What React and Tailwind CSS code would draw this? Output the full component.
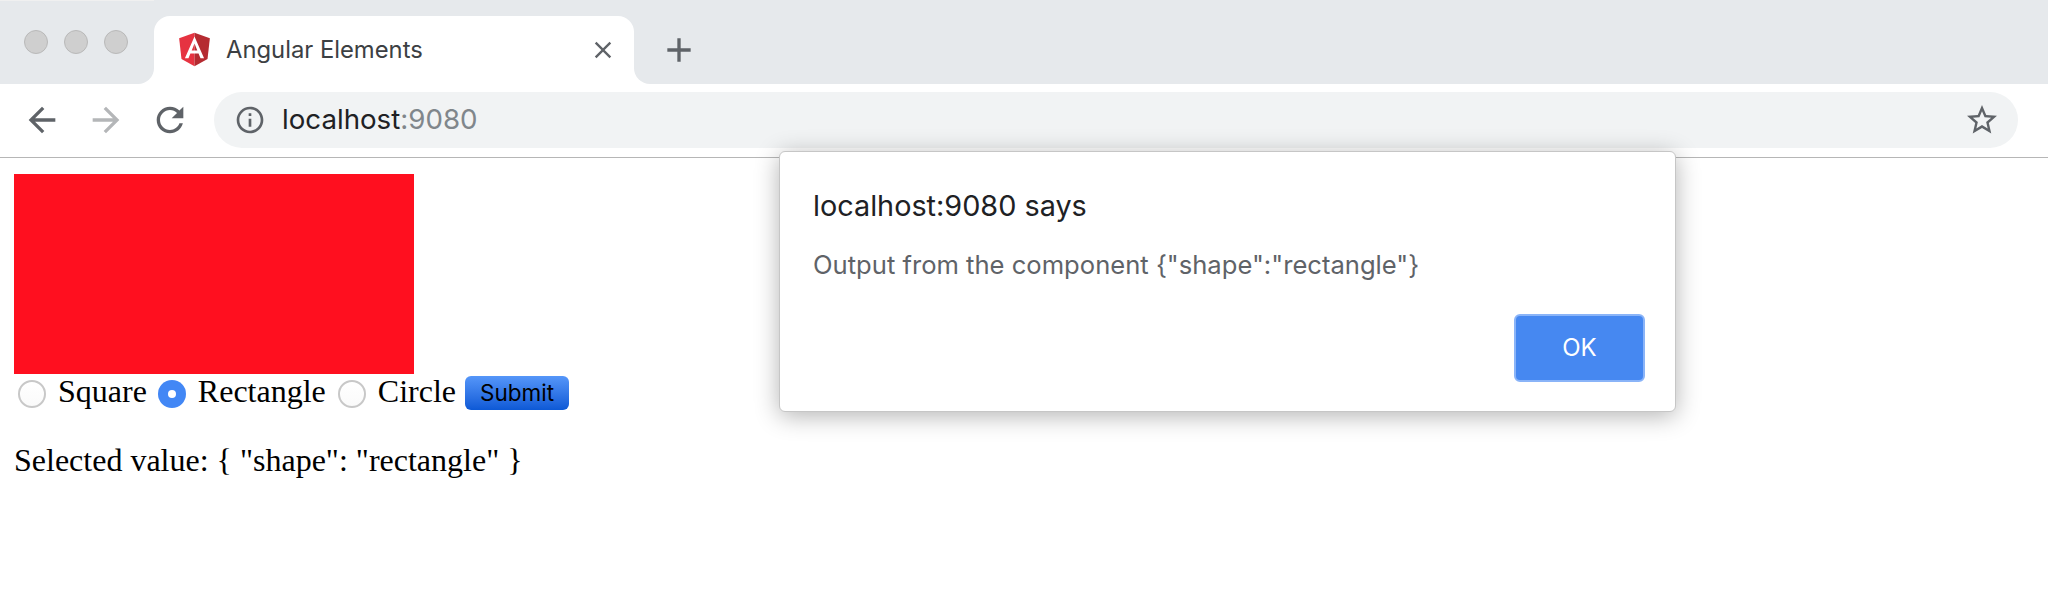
const ICON_GRAY = "#5f6368";

const Icon = ({ d, size = 40, fill = ICON_GRAY }) => (
  <svg width={size} height={size} viewBox="0 0 24 24" className="shrink-0">
    <path d={d} fill={fill} />
  </svg>
);

const AngularLogo = () => (
  <svg width="33" height="35" viewBox="25 25 200 210" preserveAspectRatio="none" className="shrink-0">
    <polygon points="125,30 31.9,63.2 46.1,186.3 125,230" fill="#e63341" />
    <polygon points="125,30 125,230 203.9,186.3 218.1,63.2" fill="#b52b31" />
    <path
      fill="#fff"
      d="M125,52.1L66.8,182.6h21.7l11.7-29.2h49.4l11.7,29.2h21.7L125,52.1z M142,135.4H108l17-40.9L142,135.4z"
    />
  </svg>
);

const Radio = ({ checked }) =>
  checked ? (
    <div className="flex h-7 w-7 shrink-0 items-center justify-center rounded-full bg-[#4287f5]">
      <div className="h-2 w-2 rounded-full bg-white" />
    </div>
  ) : (
    <div className="h-7 w-7 shrink-0 rounded-full border-2 border-[#c8c8c8] bg-gradient-to-b from-white to-[#fafafa]" />
  );

export default function App() {
  return (
    <div className="relative h-[601px] w-[2048px] overflow-hidden bg-white">
      {/* Tab strip */}
      <div className="flex h-[84px] bg-white">
        <div className="flex w-[154px] items-center gap-4 rounded-br-2xl border-t border-[#f0f0f0] bg-[#e6e9ec] pb-[2px] pl-6">
          <div className="h-6 w-6 rounded-full border border-[#b9b9b9] bg-[#cfcfcf]" />
          <div className="h-6 w-6 rounded-full border border-[#b9b9b9] bg-[#cfcfcf]" />
          <div className="h-6 w-6 rounded-full border border-[#b9b9b9] bg-[#cfcfcf]" />
        </div>
        <div className="w-[480px] bg-[#e6e9ec] pt-4">
          <div className="flex h-[68px] items-center rounded-t-2xl bg-white pb-[1px] pl-[24px] pr-[17px]">
            <AngularLogo />
            <span className="ml-[15px] flex-1 font-['Inter',sans-serif] text-[23.8px] text-[#3c4043]">
              Angular Elements
            </span>
            <Icon
              size={28}
              d="M19 6.41L17.59 5 12 10.59 6.41 5 5 6.41 10.59 12 5 17.59 6.41 19 12 13.41 17.59 19 19 17.59 13.41 12z"
            />
          </div>
        </div>
        <div className="flex flex-1 items-center rounded-bl-2xl bg-[#e6e9ec] pl-[25px] pt-4">
          <Icon size={40} d="M19 13h-6v6h-2v-6H5v-2h6V5h2v6h6v2z" />
        </div>
      </div>

      {/* Toolbar */}
      <div className="flex h-[74px] items-center gap-6 border-b border-[#b6b6b6] pb-[1px] pl-[22px] pr-[30px]">
        <Icon d="M20 11H7.83l5.59-5.59L12 4l-8 8 8 8 1.41-1.41L7.83 13H20v-2z" />
        <Icon fill="#b4b6b8" d="M4 11h12.17l-5.59-5.59L12 4l8 8-8 8-1.41-1.41L16.17 13H4v-2z" />
        <Icon d="M17.65 6.35C16.2 4.9 14.21 4 12 4c-4.42 0-7.99 3.58-7.99 8s3.57 8 7.99 8c3.73 0 6.84-2.55 7.73-6h-2.08c-.82 2.33-3.04 4-5.65 4-3.31 0-6-2.69-6-6s2.69-6 6-6c1.66 0 3.14.69 4.22 1.78L13 11h7V4l-2.35 2.35z" />
        <div className="flex h-14 flex-1 items-center rounded-full bg-[#f1f3f4] pl-[20px] pr-[18px]">
          <Icon size={32} d="M11 7h2v2h-2zm0 4h2v6h-2zm1-9C6.48 2 2 6.48 2 12s4.48 10 10 10 10-4.48 10-10S17.52 2 12 2zm0 18c-4.41 0-8-3.59-8-8s3.59-8 8-8 8 3.59 8 8-3.59 8-8 8z" />
          <span className="ml-[16px] flex-1 font-['Inter',sans-serif] text-[27.7px] text-[#202124]">
            localhost<span className="text-[#80868b]">:9080</span>
          </span>
          <Icon
            size={36}
            d="M22 9.24l-7.19-.62L12 2 9.19 8.63 2 9.24l5.46 4.73L5.82 21 12 17.27 18.18 21l-1.63-7.03L22 9.24zM12 15.4l-3.76 2.27 1-4.28-3.32-2.88 4.38-.38L12 6.1l1.71 4.04 4.38.38-3.32 2.88 1 4.28L12 15.4z"
          />
        </div>
      </div>

      {/* Page content */}
      <div className="pl-[14px] pt-4 font-['Liberation_Serif',serif] text-[32px] leading-9 text-black">
        <div className="h-[200px] w-[400px] bg-[#ff0f1f]" />
        <div className="flex h-[38px] items-center pl-1">
          <div className="mt-[2px]">
            <Radio />
          </div>
          <span className="ml-3 pb-[4px]">Square</span>
          <div className="ml-[11px] mt-[2px]">
            <Radio checked />
          </div>
          <span className="ml-3 pb-[4px]">Rectangle</span>
          <div className="ml-3 mt-[2px]">
            <Radio />
          </div>
          <span className="ml-3 pb-[4px]">Circle</span>
          <button className="ml-[9px] flex h-[34px] w-[104px] items-center justify-center rounded-md bg-gradient-to-b from-[#5596f9] to-[#0c59d6] font-['Inter',sans-serif] text-[22.5px] leading-none text-black">
            Submit
          </button>
        </div>
        <p className="mt-[30px]">Selected value: {'{'} "shape": "rectangle" {'}'}</p>
      </div>

      {/* Alert dialog */}
      <div className="absolute left-[779px] top-[151px] flex h-[261px] w-[897px] flex-col rounded-md border border-[#c6c6c6] bg-white pl-[33px] pr-[30px] pt-[36px] font-['Inter',sans-serif] shadow-[0_4px_24px_rgba(0,0,0,0.3)]">
        <h2 className="text-[28.8px] leading-9 text-[#202124]">localhost:9080 says</h2>
        <p className="mt-[25px] text-[25.6px] leading-8 text-[#5f6368]">
          Output from the component {'{'}"shape":"rectangle"{'}'}
        </p>
        <div className="mt-auto flex justify-end pb-[29px]">
          <button className="flex h-[68px] w-[131px] items-center justify-center rounded-md border-2 border-[#8ab4f8] bg-[#4688f1] text-[24px] text-white">
            OK
          </button>
        </div>
      </div>
    </div>
  );
}
